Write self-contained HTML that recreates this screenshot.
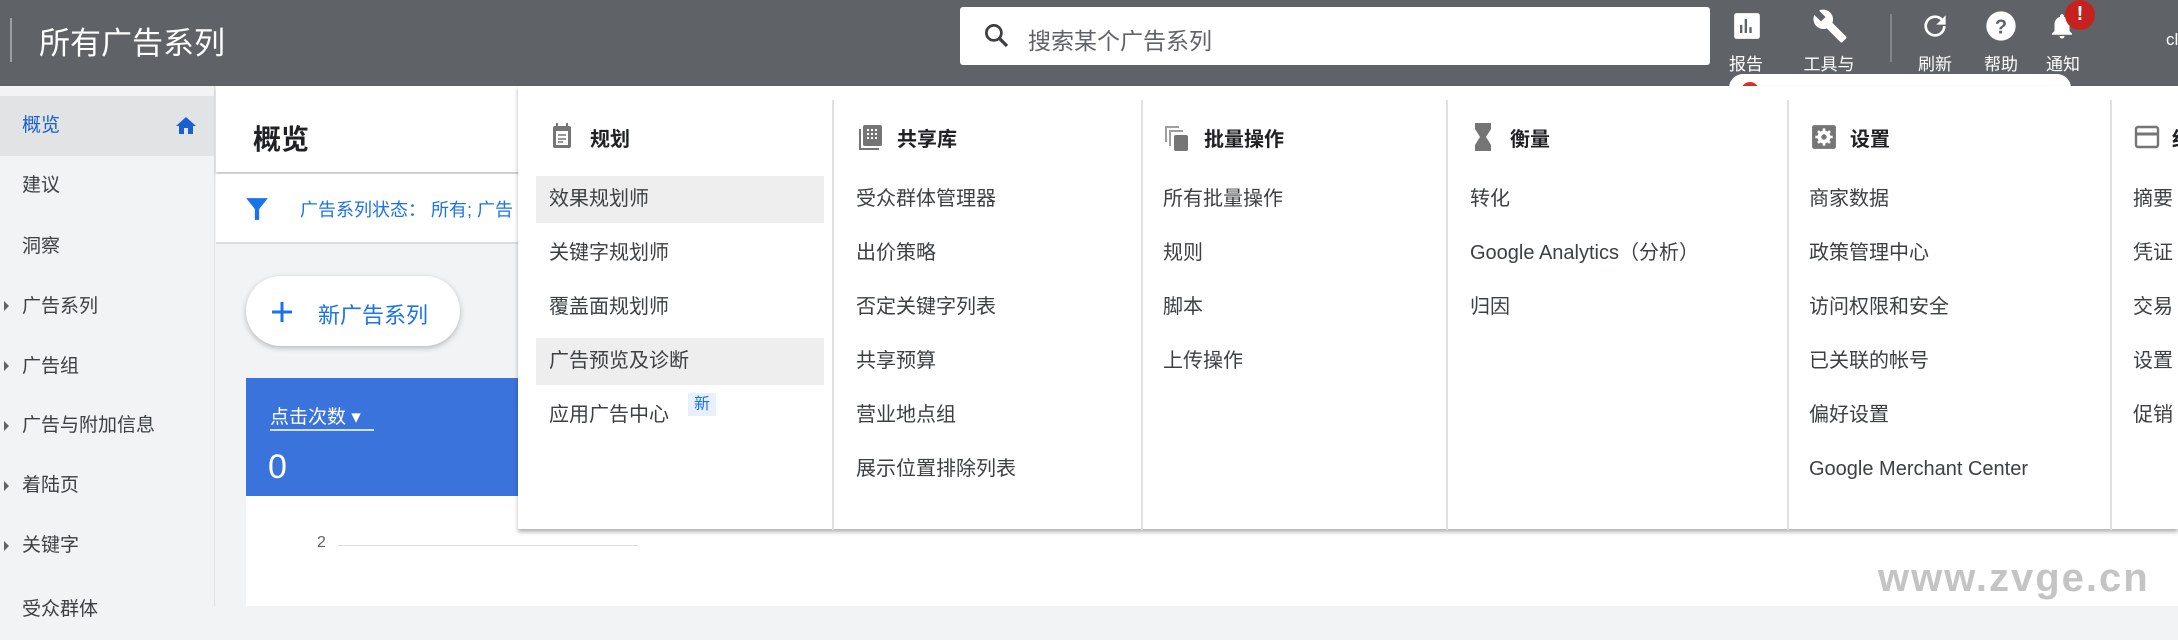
<!DOCTYPE html>
<html><head><meta charset="utf-8"><style>
*{margin:0;padding:0;box-sizing:border-box}
body{width:2178px;height:606px;overflow:hidden;position:relative;background:#f1f3f4;font-family:"Liberation Sans","Noto Sans CJK SC",sans-serif;color:#3c4043}
.a{position:absolute;white-space:nowrap}
#hdr{position:absolute;left:0;top:0;width:2178px;height:86px;background:#5f6368}
.ic{position:absolute;color:#fff;font-size:17px;text-align:center;width:60px}
.nav{position:absolute;left:0;width:215px;height:60px;font-size:19px;line-height:60px;padding-left:22px;color:#3c4043}
.col{position:absolute;top:100px;height:430px;border-left:2px solid #e0e0e0}
.h{position:absolute;top:123px;font-size:20px;font-weight:bold;color:#202124}
.it{position:absolute;font-size:20px;color:#3c4043;line-height:30px}
</style></head><body>
<div id="hdr">
 <div class="a" style="left:10px;top:18px;width:2px;height:44px;background:#9aa0a6"></div>
 <div class="a" style="left:39px;top:18px;font-size:31px;color:#fff">所有广告系列</div>
 <div class="a" style="left:960px;top:7px;width:750px;height:58px;background:#fff;border-radius:3px">
  <svg class="a" style="left:22px;top:14px" width="30" height="30" viewBox="0 0 24 24"><circle cx="9.5" cy="9.5" r="6" fill="none" stroke="#3c4043" stroke-width="2.2"/><path d="M14 14l6 6" stroke="#3c4043" stroke-width="2.6"/></svg>
  <div class="a" style="left:68px;top:15px;font-size:23px;color:#5f6368">搜索某个广告系列</div>
 </div>
 <svg class="a" style="left:1733px;top:12px" width="28" height="28" viewBox="0 0 24 24"><rect x="1" y="1" width="22" height="22" rx="2" fill="#fff"/><path d="M7 18V11M11 18V6M15 18V13" stroke="#5f6368" stroke-width="2"/></svg>
 <div class="ic" style="left:1716px;top:50px">报告</div>
 <svg class="a" style="left:1812px;top:8px" width="36" height="36" viewBox="0 0 24 24"><path fill="#fff" d="M22.7 19l-9.1-9.1c.9-2.3.4-5-1.5-6.9-2-2-5-2.4-7.4-1.3L9 6 6 9 1.6 4.7C.4 7.1.9 10.1 2.9 12.1c1.9 1.9 4.6 2.4 6.9 1.5l9.1 9.1c.4.4 1 .4 1.4 0l2.3-2.3c.5-.4.5-1.1.1-1.4z"/></svg>
 <div class="ic" style="left:1799px;top:50px">工具与</div>
 <div class="a" style="left:1890px;top:14px;width:2px;height:48px;background:#80868b"></div>
 <svg class="a" style="left:1919px;top:10px" width="32" height="32" viewBox="0 0 24 24"><path fill="#fff" d="M17.65 6.35A7.96 7.96 0 0012 4a8 8 0 108 8h-2a6 6 0 11-1.76-4.24L13 11h7V4l-2.35 2.35z"/></svg>
 <div class="ic" style="left:1905px;top:50px">刷新</div>
 <svg class="a" style="left:1985px;top:10px" width="32" height="32" viewBox="0 0 24 24"><circle cx="12" cy="12" r="11" fill="#fff"/><text x="12" y="17.5" font-size="15" font-weight="bold" text-anchor="middle" fill="#5f6368" font-family="Liberation Sans">?</text></svg>
 <div class="ic" style="left:1971px;top:50px">帮助</div>
 <svg class="a" style="left:2047px;top:10px" width="30" height="32" viewBox="0 0 24 24"><path fill="#fff" d="M12 22c1.1 0 2-.9 2-2h-4c0 1.1.9 2 2 2zm6-6v-5c0-3.1-1.6-5.6-4.5-6.3V4c0-.8-.7-1.5-1.5-1.5s-1.5.7-1.5 1.5v.7C7.6 5.4 6 7.9 6 11v5l-2 2v1h16v-1l-2-2z"/></svg>
 <div class="a" style="left:2065px;top:0px;width:30px;height:30px;border-radius:50%;background:#c5221f;color:#fff;font-weight:bold;font-size:20px;text-align:center;line-height:28px">!</div>
 <div class="ic" style="left:2033px;top:50px">通知</div>
 <div class="a" style="left:2166px;top:30px;font-size:17px;color:#fff">cl</div>
 <div class="a" style="left:1729px;top:74px;width:342px;height:30px;border-radius:14px;background:#fff"><div class="a" style="left:12px;top:8px;width:18px;height:18px;border-radius:50%;background:#d93025"></div></div>
</div>
<div class="a" style="left:0;top:86px;width:215px;height:520px;background:#f1f3f4;border-right:1px solid #e0e0e0"></div>
<div class="nav" style="top:96px;background:#e2e3e5;color:#1a5fd0">概览
 <svg class="a" style="left:174px;top:18px" width="24" height="24" viewBox="0 0 24 24"><path fill="#1a5fd0" d="M10 20v-6h4v6h5v-8h3L12 3 2 12h3v8z"/></svg></div>
<div class="nav" style="top:156px">建议</div>
<div class="nav" style="top:217px">洞察</div>
<div class="nav" style="top:277px">广告系列</div>
<div class="nav" style="top:337px">广告组</div>
<div class="nav" style="top:396px">广告与附加信息</div>
<div class="nav" style="top:456px">着陆页</div>
<div class="nav" style="top:516px">关键字</div>
<div class="nav" style="top:580px">受众群体</div>
<div class="a" style="left:4px;top:301px;border-left:5px solid #5f6368;border-top:5px solid transparent;border-bottom:5px solid transparent"></div>
<div class="a" style="left:4px;top:361px;border-left:5px solid #5f6368;border-top:5px solid transparent;border-bottom:5px solid transparent"></div>
<div class="a" style="left:4px;top:421px;border-left:5px solid #5f6368;border-top:5px solid transparent;border-bottom:5px solid transparent"></div>
<div class="a" style="left:4px;top:481px;border-left:5px solid #5f6368;border-top:5px solid transparent;border-bottom:5px solid transparent"></div>
<div class="a" style="left:4px;top:541px;border-left:5px solid #5f6368;border-top:5px solid transparent;border-bottom:5px solid transparent"></div>
<div class="a" style="left:216px;top:86px;width:1962px;height:86px;background:#fff;box-shadow:0 2px 3px rgba(0,0,0,.2)"></div>
<div class="a" style="left:253px;top:118px;font-size:28px;font-weight:bold;color:#202124">概览</div>
<div class="a" style="left:216px;top:174px;width:1962px;height:70px;background:#fff;border-bottom:2px solid #dadce0"></div>
<svg class="a" style="left:244px;top:196px" width="26" height="26" viewBox="0 0 24 24"><path fill="#1a73e8" d="M2 2h20l-8 10v10h-4V12z"/></svg>
<div class="a" style="left:300px;top:196px;font-size:18px;color:#1a73e8">广告系列状态：&nbsp;所有; 广告</div>
<div class="a" style="left:246px;top:276px;width:214px;height:70px;border-radius:35px;background:#fff;box-shadow:0 2px 6px rgba(0,0,0,.25)"></div>
<svg class="a" style="left:270px;top:300px" width="24" height="24" viewBox="0 0 24 24"><path d="M12 2v20M2 12h20" stroke="#1a73e8" stroke-width="3"/></svg>
<div class="a" style="left:318px;top:298px;font-size:22px;color:#1a73e8">新广告系列</div>
<div class="a" style="left:246px;top:378px;width:300px;height:118px;background:#3b73dd"></div>
<div class="a" style="left:270px;top:402px;font-size:19px;color:#fff">点击次数 ▾</div>
<div class="a" style="left:270px;top:429px;width:104px;height:2px;background:#cfe0ff"></div>
<div class="a" style="left:268px;top:448px;font-size:34px;color:#fff">0</div>
<div class="a" style="left:246px;top:496px;width:1932px;height:110px;background:#fff"></div>
<div class="a" style="left:317px;top:534px;font-size:16px;color:#5f6368">2</div>
<div class="a" style="left:338px;top:545px;width:300px;height:1px;background:#ddd"></div>
<div class="a" style="left:518px;top:86px;width:1660px;height:443px;background:#fff;box-shadow:0 3px 4px rgba(0,0,0,.3)"></div>
<div class="a" style="left:536px;top:176px;width:288px;height:47px;background:#eeeeee"></div>
<div class="a" style="left:536px;top:338px;width:288px;height:47px;background:#eeeeee"></div>
<div class="col" style="left:832px"></div>
<div class="col" style="left:1141px"></div>
<div class="col" style="left:1446px"></div>
<div class="col" style="left:1787px"></div>
<div class="col" style="left:2110px"></div>
<svg class="a" style="left:550px;top:122px" width="24" height="28" viewBox="0 0 24 28"><rect x="3" y="4" width="18" height="22" rx="2" fill="#757575"/><rect x="6" y="9" width="12" height="14" fill="#fff"/><path d="M8 13h8M8 17h8M8 20h5" stroke="#757575" stroke-width="1.5"/><rect x="6" y="1" width="2" height="5" fill="#757575"/><rect x="16" y="1" width="2" height="5" fill="#757575"/></svg>
<svg class="a" style="left:858px;top:124px" width="26" height="28" viewBox="0 0 26 28"><rect x="5" y="1" width="19" height="21" rx="2" fill="#757575"/><path d="M9 6h2M13 6h2M17 6h2M9 10h2M13 10h2M17 10h2M9 14h2M13 14h2M17 14h2" stroke="#fff" stroke-width="2"/><path d="M2 5v20h19" fill="none" stroke="#757575" stroke-width="2"/></svg>
<svg class="a" style="left:1164px;top:124px" width="26" height="28" viewBox="0 0 26 28"><path d="M2 18V3h13" fill="none" stroke="#9e9e9e" stroke-width="2"/><path d="M6 22V7h13" fill="none" stroke="#9e9e9e" stroke-width="2"/><rect x="10" y="11" width="14" height="16" rx="2" fill="#757575"/></svg>
<svg class="a" style="left:1474px;top:122px" width="18" height="30" viewBox="0 0 18 30"><path fill="#757575" d="M1 1h16v6l-5 8 5 8v6H1v-6l5-8-5-8z"/></svg>
<svg class="a" style="left:1811px;top:124px" width="26" height="26" viewBox="0 0 24 24"><rect x="1" y="1" width="22" height="22" rx="2" fill="#757575"/><circle cx="12" cy="12" r="6" fill="#fff"/><circle cx="12" cy="12" r="2.5" fill="#757575"/><path d="M12 4v3M12 17v3M4 12h3M17 12h3M6.5 6.5l2 2M15.5 15.5l2 2M6.5 17.5l2-2M15.5 8.5l2-2" stroke="#fff" stroke-width="2.4"/></svg>
<svg class="a" style="left:2134px;top:125px" width="26" height="24" viewBox="0 0 26 24"><rect x="2" y="2" width="22" height="20" rx="2" fill="none" stroke="#757575" stroke-width="2.4"/><path d="M2 9h22" stroke="#757575" stroke-width="3"/></svg>
<div class="h" style="left:590px">规划</div>
<div class="h" style="left:897px">共享库</div>
<div class="h" style="left:1204px">批量操作</div>
<div class="h" style="left:1510px">衡量</div>
<div class="h" style="left:1850px">设置</div>
<div class="h" style="left:2172px">结</div>
<div class="it" style="left:549px;top:184px">效果规划师</div>
<div class="it" style="left:549px;top:238px">关键字规划师</div>
<div class="it" style="left:549px;top:292px">覆盖面规划师</div>
<div class="it" style="left:549px;top:346px">广告预览及诊断</div>
<div class="it" style="left:549px;top:400px">应用广告中心</div>
<div class="a" style="left:688px;top:393px;width:28px;height:23px;background:#e8f0fe;color:#1a73e8;font-size:16px;text-align:center;line-height:23px">新</div>
<div class="it" style="left:856px;top:184px">受众群体管理器</div>
<div class="it" style="left:856px;top:238px">出价策略</div>
<div class="it" style="left:856px;top:292px">否定关键字列表</div>
<div class="it" style="left:856px;top:346px">共享预算</div>
<div class="it" style="left:856px;top:400px">营业地点组</div>
<div class="it" style="left:856px;top:454px">展示位置排除列表</div>
<div class="it" style="left:1163px;top:184px">所有批量操作</div>
<div class="it" style="left:1163px;top:238px">规则</div>
<div class="it" style="left:1163px;top:292px">脚本</div>
<div class="it" style="left:1163px;top:346px">上传操作</div>
<div class="it" style="left:1470px;top:184px">转化</div>
<div class="it" style="left:1470px;top:238px">Google Analytics（分析）</div>
<div class="it" style="left:1470px;top:292px">归因</div>
<div class="it" style="left:1809px;top:184px">商家数据</div>
<div class="it" style="left:1809px;top:238px">政策管理中心</div>
<div class="it" style="left:1809px;top:292px">访问权限和安全</div>
<div class="it" style="left:1809px;top:346px">已关联的帐号</div>
<div class="it" style="left:1809px;top:400px">偏好设置</div>
<div class="it" style="left:1809px;top:454px">Google Merchant Center</div>
<div class="it" style="left:2133px;top:184px">摘要</div>
<div class="it" style="left:2133px;top:238px">凭证</div>
<div class="it" style="left:2133px;top:292px">交易</div>
<div class="it" style="left:2133px;top:346px">设置</div>
<div class="it" style="left:2133px;top:400px">促销</div>
<div class="a" style="left:1878px;top:556px;font-size:40px;color:#c4c4c4;font-weight:bold;letter-spacing:2px">www.zvge.cn</div>
</body></html>
